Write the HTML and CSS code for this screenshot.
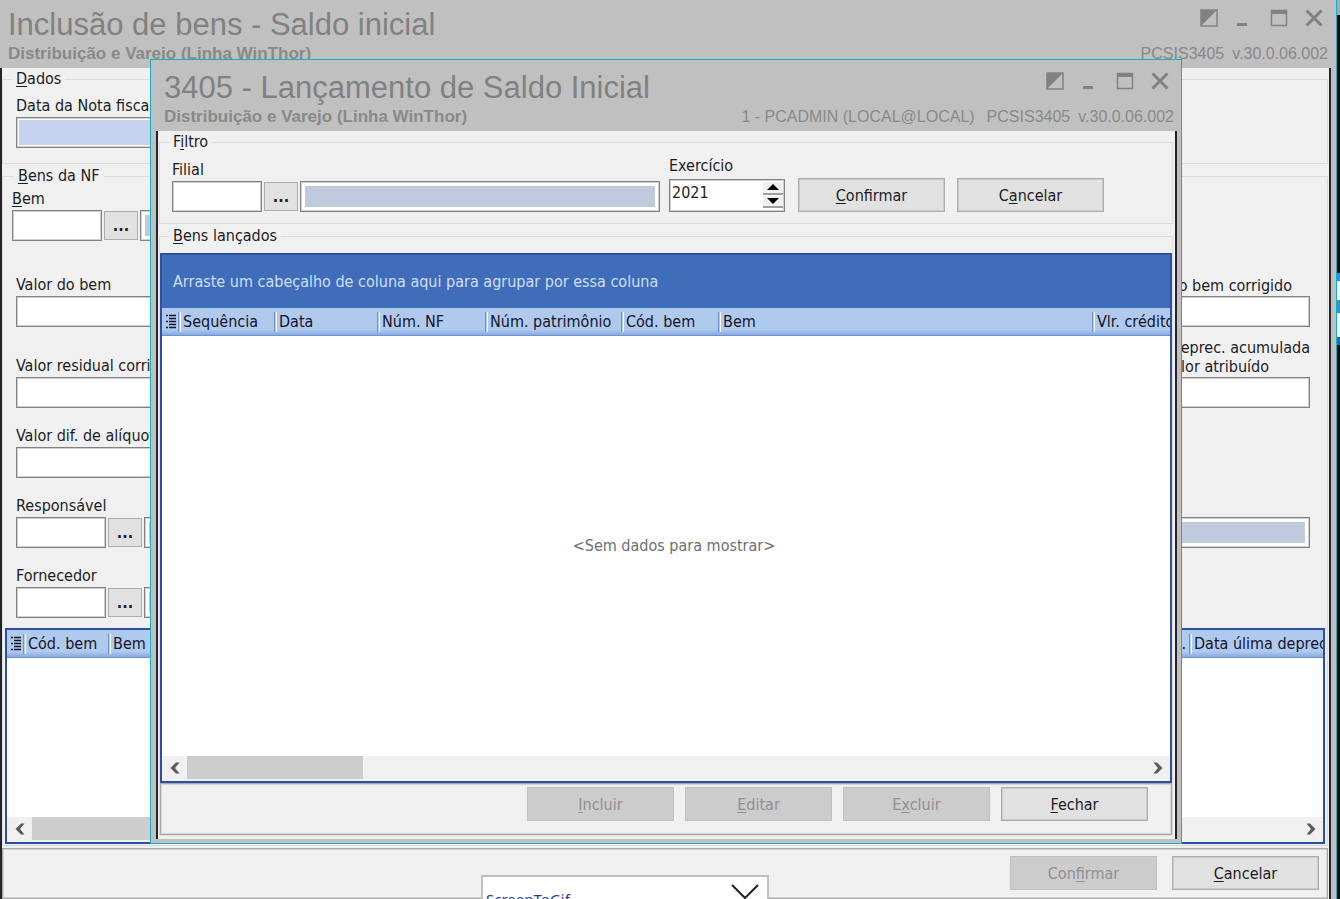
FILE: index.html
```html
<!DOCTYPE html>
<html lang="pt-BR">
<head>
<meta charset="utf-8">
<title>Inclusão de bens - Saldo inicial</title>
<link rel="stylesheet" href="styles.css">
</head>
<body>
<svg class="defs" aria-hidden="true">
  <symbol id="i-theme" viewBox="0 0 18 18"><path d="M1 1h16v16H1z" fill="none" stroke="currentColor" stroke-width="1.5"/><path d="M1 1h16L1 17z" fill="currentColor"/></symbol>
  <symbol id="i-min" viewBox="0 0 18 18"><path d="M2 14h10v3H2z" fill="currentColor"/></symbol>
  <symbol id="i-max" viewBox="0 0 18 18"><path d="M1.500 1.500h15v15h-15z" fill="none" stroke="currentColor" stroke-width="1.500"/><path d="M1 1h16v4H1z" fill="currentColor"/></symbol>
  <symbol id="i-close" viewBox="0 0 18 18"><path d="M1.500 1.500l15 15M16.500 1.500L1.500 16.500" fill="none" stroke="currentColor" stroke-width="3"/></symbol>
  <symbol id="i-left" viewBox="0 0 10 12"><path d="M9.500 0.500H6L0.500 6 6 11.500h3.500L5 6z" fill="currentColor"/></symbol>
  <symbol id="i-right" viewBox="0 0 10 12"><path d="M0.500 0.500H4L9.500 6 4 11.500H0.500L5 6z" fill="currentColor"/></symbol>
  <symbol id="i-cols" viewBox="0 0 10 15"><path d="M3 1.500h7M3 4.500h7M3 7.500h7M3 10.500h7M3 13.500h7" stroke="currentColor" stroke-width="1.500"/><path d="M0 1.500h2M0 7.500h2M0 13.500h2" stroke="currentColor" stroke-width="1.500"/></symbol>
</svg>

<div class="desktop">
  <main class="window">
    <header class="titlebar">
      <div class="titlebar-row">
        <h1 class="title">Inclusão de bens - Saldo inicial</h1>
        <div class="controls">
          <button type="button" aria-label="Tema"><svg><use href="#i-theme"/></svg></button>
          <button type="button" aria-label="Minimizar"><svg><use href="#i-min"/></svg></button>
          <button type="button" aria-label="Maximizar"><svg><use href="#i-max"/></svg></button>
          <button type="button" aria-label="Fechar janela"><svg><use href="#i-close"/></svg></button>
        </div>
      </div>
      <div class="titlebar-row">
        <p class="subtitle">Distribuição e Varejo (Linha WinThor)</p>
        <p class="version"><span>PCSIS3405</span><span>v.30.0.06.002</span></p>
      </div>
    </header>

    <div class="client">
      <fieldset class="group group-dados">
        <legend><u>D</u>ados</legend>
        <div class="field">
          <label for="data-nf">Data da Nota fiscal</label>
          <input id="data-nf" class="box tinted-blue" type="text">
        </div>
      </fieldset>

      <fieldset class="group group-bens">
        <legend><u>B</u>ens da NF</legend>
        <div class="row row-bem">
          <div class="field">
            <label for="bem"><u>B</u>em</label>
            <div class="lookup"><input id="bem" class="box code" type="text"><button type="button" class="more">...</button><input class="box tinted" type="text" aria-label="Nome do bem" readonly></div>
          </div>
        </div>
        <div class="row row-valor">
          <div class="field">
            <label for="valor">Valor do bem</label>
            <input id="valor" class="box" type="text">
          </div>
          <div class="field field-end">
            <label for="corrigido" class="label-corrigido">Valor do bem corrigido</label>
            <input id="corrigido" class="box" type="text">
          </div>
        </div>
        <div class="row row-residual">
          <div class="field">
            <label for="residual">Valor residual corrigido</label>
            <input id="residual" class="box" type="text">
          </div>
          <div class="field field-end">
            <label for="deprec">Valor deprec. acumulada<span class="label-atribuido">valor atribuído</span></label>
            <input id="deprec" class="box" type="text">
          </div>
        </div>
        <div class="row">
          <div class="field">
            <label for="aliquota">Valor dif. de alíquota</label>
            <input id="aliquota" class="box" type="text">
          </div>
        </div>
        <div class="row">
          <div class="field field-wide">
            <label for="resp">Responsável</label>
            <div class="lookup"><input id="resp" class="box code" type="text"><button type="button" class="more">...</button><input class="box tinted" type="text" aria-label="Nome do responsável" readonly></div>
          </div>
        </div>
        <div class="row">
          <div class="field">
            <label for="forn">Fornecedor</label>
            <div class="lookup"><input id="forn" class="box code" type="text"><button type="button" class="more">...</button><input class="box tinted" type="text" aria-label="Nome do fornecedor" readonly></div>
          </div>
        </div>
        <div class="grid grid-back">
          <table>
            <colgroup><col class="c-icon"><col class="c-85"><col><col class="c-date"></colgroup>
            <thead><tr>
              <th><svg class="cols" aria-label="Colunas"><use href="#i-cols"/></svg></th>
              <th>Cód. bem</th><th><span class="split"><span>Bem</span><span>deprec.</span></span></th><th>Data úlima deprec</th>
            </tr></thead>
          </table>
          <div class="grid-body"></div>
          <div class="scroll"><button type="button" aria-label="Rolar à esquerda"><svg><use href="#i-left"/></svg></button><div class="track"><div class="thumb thumb-long"></div></div><button type="button" aria-label="Rolar à direita"><svg><use href="#i-right"/></svg></button></div>
        </div>
      </fieldset>

      <footer class="actions actions-back">
        <button type="button" class="btn" disabled>Con<u>f</u>irmar</button>
        <button type="button" class="btn"><u>C</u>ancelar</button>
      </footer>
    </div>
  </main>
  <div class="wallpaper"></div>

  <section class="dialog" role="dialog" aria-labelledby="dlg-title">
    <header class="titlebar">
      <div class="titlebar-row">
        <h2 class="title" id="dlg-title">3405 - Lançamento de Saldo Inicial</h2>
        <div class="controls">
          <button type="button" aria-label="Tema"><svg><use href="#i-theme"/></svg></button>
          <button type="button" aria-label="Minimizar"><svg><use href="#i-min"/></svg></button>
          <button type="button" aria-label="Maximizar"><svg><use href="#i-max"/></svg></button>
          <button type="button" aria-label="Fechar janela"><svg><use href="#i-close"/></svg></button>
        </div>
      </div>
      <div class="titlebar-row">
        <p class="subtitle">Distribuição e Varejo (Linha WinThor)</p>
        <p class="version"><span class="user">1 - PCADMIN (LOCAL@LOCAL)</span><span>PCSIS3405</span><span>v.30.0.06.002</span></p>
      </div>
    </header>
    <div class="client">
      <fieldset class="group">
        <legend>F<u>i</u>ltro</legend>
        <div class="filter">
          <div class="field field-filial">
            <label for="filial">Filial</label>
            <div class="lookup"><input id="filial" class="box code" type="text"><button type="button" class="more">...</button><input class="box tinted" type="text" aria-label="Nome da filial" readonly></div>
          </div>
          <div class="field field-year">
            <label for="ano">Exercício</label>
            <div class="spin box">
              <input id="ano" type="text" value="2021">
              <div class="spin-buttons">
                <button type="button" aria-label="Aumentar"><svg viewBox="0 0 12 6"><path d="M6 0l6 6H0z"/></svg></button>
                <button type="button" aria-label="Diminuir"><svg viewBox="0 0 12 6"><path d="M0 0h12L6 6z"/></svg></button>
              </div>
            </div>
          </div>
          <button type="button" class="btn"><u>C</u>onfirmar</button>
          <button type="button" class="btn">C<u>a</u>ncelar</button>
        </div>
      </fieldset>
      <fieldset class="group group-list">
        <legend><u>B</u>ens lançados</legend>
        <div class="grid">
          <div class="group-by">Arraste um cabeçalho de coluna aqui para agrupar por essa coluna</div>
          <table>
            <colgroup><col class="c-icon"><col class="c-seq"><col class="c-data"><col class="c-nf"><col class="c-pat"><col class="c-cod"><col><col class="c-vlr"></colgroup>
            <thead><tr>
              <th><svg class="cols" aria-label="Colunas"><use href="#i-cols"/></svg></th>
              <th>Sequência</th><th>Data</th><th>Núm. NF</th><th>Núm. patrimônio</th><th>Cód. bem</th><th>Bem</th><th>Vlr. crédito</th>
            </tr></thead>
          </table>
          <div class="grid-body">&lt;Sem dados para mostrar&gt;</div>
          <div class="scroll"><button type="button" aria-label="Rolar à esquerda"><svg><use href="#i-left"/></svg></button><div class="track"><div class="thumb"></div></div><button type="button" aria-label="Rolar à direita"><svg><use href="#i-right"/></svg></button></div>
        </div>
        <div class="actions">
          <button type="button" class="btn" disabled><u>I</u>ncluir</button>
          <button type="button" class="btn" disabled><u>E</u>ditar</button>
          <button type="button" class="btn" disabled>E<u>x</u>cluir</button>
          <button type="button" class="btn"><u>F</u>echar</button>
        </div>
      </fieldset>
    </div>
  </section>

  <aside class="toast">
    <span>ScreenToGif</span>
    <svg viewBox="0 0 28 16" aria-hidden="true"><path d="M1 1l13 13L27 1" fill="none" stroke="#222" stroke-width="2"/></svg>
  </aside>
</div>
</body>
</html>
```

FILE: styles.css
```css
* { box-sizing: border-box; }
body, h1, h2, p, fieldset { margin: 0; }
body, button, input {
  font-family: "DejaVu Sans Condensed", "Noto Sans", sans-serif;
  font-size: 16px;
  color: #1c1c26;
}
body { line-height: 20px; overflow: hidden; }
button { padding: 0; cursor: pointer; }
u { text-underline-offset: 2px; }
.defs { display: none; }

.desktop { position: relative; display: flex; height: 100vh; min-height: 899px; overflow: hidden; }
.window {
  flex: 1; min-width: 0;
  display: flex; flex-direction: column;
  background: #c0c0c0;
  border-right: 1px solid #00b7c8;
}
.wallpaper {
  width: 3px;
  background: linear-gradient(#aaa 15px, #000 15px 273px, #3a8fd0 273px 281px, #fff 281px 300px, #3a8fd0 300px 313px, #fff 313px 337px, #3567b8 337px 345px, #000 345px);
}

/* title bar */
.titlebar { padding: 7px 8px 4px; color: #808281; }
.titlebar-row { display: flex; justify-content: space-between; }
.title { font: 400 31px/36px "Liberation Sans", Arial, sans-serif; white-space: nowrap; }
.subtitle { font: 700 17px/21px "Liberation Sans", Arial, sans-serif; white-space: nowrap; color: #888a89; }
.version { display: flex; gap: 8px; font: 400 16px/21px "Liberation Sans", Arial, sans-serif; white-space: nowrap; color: #888a89; }
.user { margin-right: 4px; }
.controls { display: flex; gap: 17px; padding: 2px 5px 0 0; }
.controls button { width: 18px; height: 18px; border: 0; background: none; color: inherit; }
.controls svg { display: block; width: 18px; height: 18px; }

/* client area */
.client {
  flex: 1; min-height: 0;
  display: flex; flex-direction: column;
  background: #f0f0f0;
}
.window > .client {
  margin-right: 5px;
  padding: 1px 1px 0 0;
  border: solid #26222a;
  border-width: 0 2px;
}
.group { min-width: 0; padding: 0; border: 1px solid #dcdcdc; }
.group legend { margin-left: 9px; padding: 0 4px; line-height: 20px; }
.group-dados { padding: 7px 13px 15px; }
.group-dados legend { margin-left: -4px; }
.group-bens { flex: 1; min-height: 0; margin-top: 2px; padding: 3px 2px 1px; display: flex; flex-direction: column; }

.row { display: flex; justify-content: space-between; align-items: flex-end; margin-top: 18px; padding: 0 15px 0 11px; }
.row-bem { margin-top: 0; padding-left: 7px; }
.row-valor { margin-top: 34px; }
.row-residual { margin-top: 11px; }
.field { display: flex; flex-direction: column; gap: 1px; width: 240px; }
.field label { white-space: nowrap; }
.field-wide { width: 100%; }
.field-end { width: 190px; text-align: right; }
.field-end label { line-height: 19px; }
.label-corrigido { padding-right: 18px; }
.label-atribuido { display: block; padding-right: 41px; }

.box {
  width: 100%; height: 31px; padding: 0 4px;
  background: #fff;
  border: 1px solid #828282; border-radius: 0;
  box-shadow: inset 0 0 0 1px #cfcfcf;
}
.tinted, .tinted-blue { flex: 1; min-width: 0; padding: 0; }
.tinted { background: #bfcbdc; box-shadow: inset 0 0 0 1px #cfcfcf, inset 0 0 0 4px #fff; }
.tinted-blue { flex: none; background: #c5d3ef; box-shadow: inset 0 0 0 1px #cfcfcf, inset 0 0 0 2px #fff; }
.lookup { display: flex; align-items: center; gap: 2px; }
.code { flex: none; width: 90px; }
.more { flex: none; width: 34px; height: 29px; background: #e1e1e1; border: 1px solid #adadad; font-weight: 700; }

.btn { width: 147px; height: 34px; background: #e1e1e1; border: 1px solid #adadad; box-shadow: inset 0 0 0 1px #cacaca; }
.btn:disabled { background: #cccccc; border-color: #c0c0c0; box-shadow: none; color: #909090; }

.actions { display: flex; justify-content: flex-end; gap: 11px; border: 1px solid #a8a8a8; box-shadow: inset 0 0 0 1px #d4d4d4; }
.actions-back { gap: 15px; margin-top: 2px; padding: 7px 8px 8px; }

/* data grid */
.grid { flex: 1; min-height: 0; display: flex; flex-direction: column; background: #fff; border: 2px solid #2c4fa5; }
.grid-back { margin-top: 10px; }
.group-by { padding: 17px 11px 16px; background: #3f6dba; color: #cfdff7; white-space: nowrap; overflow: hidden; }
.grid table { width: 100%; table-layout: fixed; border-collapse: separate; border-spacing: 0; }
.grid th {
  height: 28px; padding: 0 2px;
  font-weight: 400; text-align: left; white-space: nowrap; overflow: hidden;
  color: #14142a;
  background:
    linear-gradient(#6b93d6, #6b93d6) right 2px top 4px / 1px 20px no-repeat,
    linear-gradient(#fff, #fff) right 0 top 4px / 1px 20px no-repeat,
    linear-gradient(#b0caee 80%, #86a9e0);
  border-bottom: 1px solid #6c92d6;
}
.grid th:last-child { background: linear-gradient(#b0caee 80%, #86a9e0); }
.cols { display: block; width: 10px; height: 15px; margin-left: 2px; }
.c-icon { width: 19px; }
.c-85 { width: 85px; }
.c-date { width: 131px; }
.c-seq { width: 96px; }
.c-data { width: 103px; }
.c-nf { width: 108px; }
.c-pat { width: 136px; }
.c-cod { width: 97px; }
.c-vlr { width: 75px; }
.split { display: flex; justify-content: space-between; padding-right: 4px; }
.grid-body { flex: 1; display: flex; align-items: center; justify-content: center; padding-left: 16px; color: #6e6e6e; }
.scroll { display: flex; height: 25px; background: #f0f0f0; }
.scroll button { width: 25px; height: 23px; border: 0; background: none; color: #5f5955; }
.scroll svg { display: block; width: 10px; height: 12px; margin: 0 auto; }
.track { flex: 1; }
.thumb { width: 176px; height: 23px; background: #cdcdcd; }
.thumb-long { width: 50%; }

/* dialog over the main window */
.dialog {
  position: absolute; top: 59px; left: 150px; right: 158px; bottom: 55px;
  display: flex; flex-direction: column;
  padding: 1px 4px 4px 5px;
  background: #c0c0c0;
  border: 1px solid #12b1c1;
}
.dialog .titlebar { padding: 9px 3px 4px 8px; }
.dialog .controls { padding-right: 5px; }
.dialog .client { padding: 1px 2px 3px 1px; border: solid #26222a; border-width: 0 2px; }
.filter { display: flex; align-items: flex-end; gap: 12px; padding: 4px 12px 11px; }
.field-filial { width: 488px; margin-right: -3px; }
.field-year { width: 116px; gap: 3px; margin-right: 1px; }
.spin { display: flex; height: 33px; padding: 1px; }
.spin input { flex: 1; min-width: 0; padding: 0 1px 6px; border: 0; background: none; }
.spin-buttons { display: flex; flex-direction: column; width: 20px; padding: 1px 0 2px; gap: 1px; }
.spin-buttons button { flex: 1; display: flex; align-items: center; justify-content: center; background: #f0f0f0; border: 0; border-bottom: 2px solid #a0a0a0; }
.spin-buttons svg { width: 12px; height: 6px; }
.group-list { flex: 1; min-height: 0; margin-top: 2px; padding-top: 7px; display: flex; flex-direction: column; }
.group-list .actions { padding: 3px 23px 13px; }

/* notification at the screen bottom */
.toast {
  position: absolute; left: 481px; bottom: -44px;
  display: flex; justify-content: space-between; align-items: flex-start;
  width: 288px; height: 68px; padding: 7px 8px 0 3px;
  background: #fff; border: 2px solid #bfbfbf;
  font: 15px/20px "Noto Sans", sans-serif; color: #1b3f9c;
}
.toast span { padding-top: 5px; }
.toast svg { width: 28px; height: 16px; }
```
